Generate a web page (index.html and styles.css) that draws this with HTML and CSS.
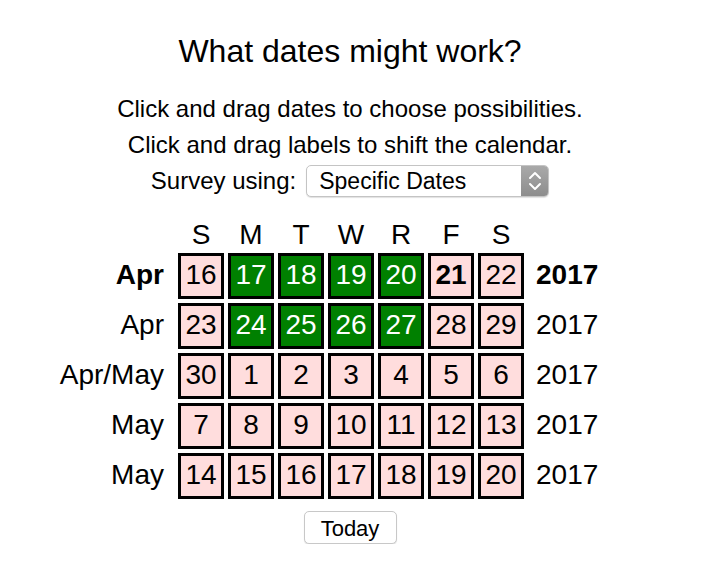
FILE: index.html
```html
<!DOCTYPE html>
<html>
<head>
<meta charset="utf-8">
<title>What dates might work?</title>
<link rel="stylesheet" href="styles.css">
</head>
<body>
<div class="page">
  <h1 class="title">What dates might work?</h1>
  <p class="hint">Click and drag dates to choose possibilities.</p>
  <p class="hint">Click and drag labels to shift the calendar.</p>
  <div class="survey">
    <span class="survey-label">Survey using:</span>
    <div class="select">
      <span class="select-value">Specific Dates</span>
      <span class="select-arrows">
        <svg width="14" height="22" viewBox="0 0 14 22">
          <path d="M2 8 L7 3 L12 8" fill="none" stroke="#fff" stroke-width="2" stroke-linecap="round" stroke-linejoin="round"/>
          <path d="M2 14 L7 19 L12 14" fill="none" stroke="#fff" stroke-width="2" stroke-linecap="round" stroke-linejoin="round"/>
        </svg>
      </span>
    </div>
  </div>

  <div class="calendar">
    <div class="blank"></div>
    <div class="dow">S</div><div class="dow">M</div><div class="dow">T</div><div class="dow">W</div><div class="dow">R</div><div class="dow">F</div><div class="dow">S</div>
    <div class="blank"></div>

    <div class="month bold">Apr</div>
    <div class="day">16</div><div class="day on">17</div><div class="day on">18</div><div class="day on">19</div><div class="day on">20</div><div class="day bold">21</div><div class="day">22</div>
    <div class="year bold">2017</div>

    <div class="month">Apr</div>
    <div class="day">23</div><div class="day on">24</div><div class="day on">25</div><div class="day on">26</div><div class="day on">27</div><div class="day">28</div><div class="day">29</div>
    <div class="year">2017</div>

    <div class="month">Apr/May</div>
    <div class="day">30</div><div class="day">1</div><div class="day">2</div><div class="day">3</div><div class="day">4</div><div class="day">5</div><div class="day">6</div>
    <div class="year">2017</div>

    <div class="month">May</div>
    <div class="day">7</div><div class="day">8</div><div class="day">9</div><div class="day">10</div><div class="day">11</div><div class="day">12</div><div class="day">13</div>
    <div class="year">2017</div>

    <div class="month">May</div>
    <div class="day">14</div><div class="day">15</div><div class="day">16</div><div class="day">17</div><div class="day">18</div><div class="day">19</div><div class="day">20</div>
    <div class="year">2017</div>
  </div>

  <div class="actions">
    <button class="today">Today</button>
  </div>
</div>
</body>
</html>
```

FILE: styles.css
```css
html, body {
  margin: 0;
  padding: 0;
  background: #fff;
}
body {
  font-family: "Liberation Sans", Arial, Helvetica, sans-serif;
  color: #000;
}
.page {
  width: 700px;
  padding-top: 33px;
  text-align: center;
}
.title {
  margin: 0;
  font-size: 32px;
  font-weight: normal;
  line-height: 37px;
}
.hint {
  margin: 0;
  font-size: 24px;
  line-height: 36px;
}
.hint:first-of-type {
  margin-top: 21px;
}
.survey {
  display: flex;
  justify-content: center;
  align-items: center;
  height: 36px;
  gap: 10px;
  font-size: 24px;
}
.survey-label {
  line-height: 36px;
}
.select {
  display: flex;
  align-items: stretch;
  width: 243px;
  height: 32px;
  box-sizing: border-box;
  border: 1px solid #c4c4c4;
  border-radius: 5px;
  box-shadow: 0 1px 1px rgba(0,0,0,0.12);
  overflow: hidden;
  background: #fff;
  text-align: left;
}
.select-value {
  flex: 1;
  font-size: 23px;
  line-height: 31px;
  padding-left: 12px;
}
.select-arrows {
  width: 27px;
  display: flex;
  align-items: center;
  justify-content: center;
  background: linear-gradient(#a9a9a9, #8d8d8d);
}
.calendar {
  margin-top: 23px;
  display: grid;
  grid-template-columns: 121px repeat(7, 46px) 119px;
  grid-auto-rows: 46px;
  grid-template-rows: 27px;
  gap: 4px;
  justify-content: center;
  font-size: 28px;
}
.dow {
  line-height: 26px;
  text-align: center;
}
.month {
  text-align: right;
  padding-right: 10px;
  line-height: 44px;
  white-space: nowrap;
}
.year {
  text-align: left;
  padding-left: 8px;
  line-height: 44px;
}
.day {
  box-sizing: border-box;
  height: 46px;
  border: 3px solid #000;
  background: #ffdddd;
  line-height: 37px;
  text-align: center;
}
.day.on {
  background: #008000;
  color: #fff;
}
.bold {
  font-weight: bold;
}
.actions {
  margin-top: 12px;
  display: flex;
  justify-content: center;
}
.today {
  width: 93px;
  height: 33px;
  box-sizing: border-box;
  border: 1px solid #c8c8c8;
  border-radius: 5px;
  background: #fff;
  box-shadow: 0 1px 1px rgba(0,0,0,0.12);
  font-family: "Liberation Sans", Arial, Helvetica, sans-serif;
  font-size: 22px;
  line-height: 29px;
  padding: 2px 0 0;
  color: #000;
}
```
